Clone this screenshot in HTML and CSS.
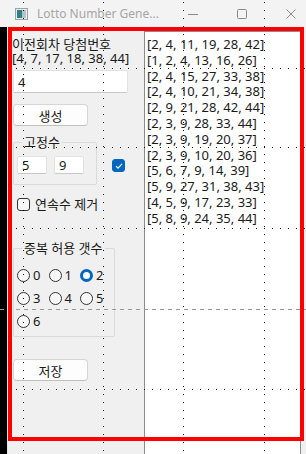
FILE: index.html
```html
<!DOCTYPE html>
<html lang="ko">
<head>
    <meta charset="UTF-8">
    <meta name="viewport" content="width=device-width, initial-scale=1.0">
    <title>Lotto Number Generator</title>
    <link rel="stylesheet" href="styles.css">
</head>
<body>
    <header class="titlebar">
        <svg class="app-icon" width="13" height="12" viewBox="0 0 13 12">
            <rect x="0.5" y="0.5" width="12" height="11" fill="#e8eef0" stroke="#9aa4a8"/>
            <rect x="2" y="2" width="5" height="8" fill="#2f7f86"/>
            <rect x="7" y="2" width="4" height="8" fill="#b9c3c6"/>
        </svg>
        <span class="title">Lotto Number Gene...</span>
        <div class="controls">
            <span class="ctl">
                <svg width="12" height="12" viewBox="0 0 12 12"><path d="M1 6.5h10" stroke="#8a8a8a" stroke-width="1"/></svg>
            </span>
            <span class="ctl">
                <svg width="12" height="12" viewBox="0 0 12 12"><rect x="1.5" y="1.5" width="9" height="9" rx="1" fill="none" stroke="#8a8a8a"/></svg>
            </span>
            <span class="ctl">
                <svg width="12" height="12" viewBox="0 0 12 12"><path d="M1.5 1.5l9 9M10.5 1.5l-9 9" stroke="#8a8a8a" stroke-width="1"/></svg>
            </span>
        </div>
    </header>

    <div class="window-body">
        <div class="edge"></div>
        <main class="form">
            <section class="controls-panel">
                <div class="prev-label">
                    <p>이전회차 당첨번호</p>
                    <p>[4, 7, 17, 18, 38, 44]</p>
                </div>
                <div class="text-input wide">4</div>
                <button class="btn">생성</button>

                <div class="fixed-row">
                    <fieldset class="group fixed-group">
                        <legend>고정수</legend>
                        <div class="fixed-inputs">
                            <div class="text-input small">5</div>
                            <div class="text-input small">9</div>
                        </div>
                    </fieldset>
                    <span class="check checked">
                        <svg width="10" height="10" viewBox="0 0 10 10"><path d="M2 5.2l2 2 4-4.4" fill="none" stroke="#fff" stroke-width="1.2"/></svg>
                    </span>
                </div>

                <label class="check-row">
                    <span class="check"></span>
                    <span>연속수 제거</span>
                </label>

                <fieldset class="group dup-group">
                    <legend>중복 허용 갯수</legend>
                    <div class="radios">
                        <label class="radio-item"><span class="radio"></span>0</label>
                        <label class="radio-item"><span class="radio"></span>1</label>
                        <label class="radio-item"><span class="radio on"></span>2</label>
                        <label class="radio-item"><span class="radio"></span>3</label>
                        <label class="radio-item"><span class="radio"></span>4</label>
                        <label class="radio-item"><span class="radio"></span>5</label>
                        <label class="radio-item"><span class="radio"></span>6</label>
                    </div>
                </fieldset>

                <button class="btn save">저장</button>
            </section>

            <section class="result-list">
                <p>[2, 4, 11, 19, 28, 42]</p>
                <p>[1, 2, 4, 13, 16, 26]</p>
                <p>[2, 4, 15, 27, 33, 38]</p>
                <p>[2, 4, 10, 21, 34, 38]</p>
                <p>[2, 9, 21, 28, 42, 44]</p>
                <p>[2, 3, 9, 28, 33, 44]</p>
                <p>[2, 3, 9, 19, 20, 37]</p>
                <p>[2, 3, 9, 10, 20, 36]</p>
                <p>[5, 6, 7, 9, 14, 39]</p>
                <p>[5, 9, 27, 31, 38, 43]</p>
                <p>[4, 5, 9, 17, 23, 33]</p>
                <p>[5, 8, 9, 24, 35, 44]</p>
            </section>
        </main>
    </div>

    <!-- designer overlay: grid dots and selection frame -->
    <div class="grid-overlay">
        <div class="vline" style="left: 23px"></div>
        <div class="vline" style="left: 103px"></div>
        <div class="vline" style="left: 183px"></div>
        <div class="vline" style="left: 264px"></div>
        <div class="hline" style="top: 68px"></div>
        <div class="hline" style="top: 147px"></div>
        <div class="hline" style="top: 228px"></div>
        <div class="hline dashed" style="top: 309px"></div>
        <div class="hline" style="top: 389px"></div>
    </div>
    <div class="selection"></div>
</body>
</html>
```

FILE: styles.css
```css
* {
    margin: 0;
    padding: 0;
    box-sizing: border-box;
}

body {
    width: 306px;
    height: 454px;
    overflow: hidden;
    position: relative;
    background-color: #f0f0f0;
    color: #1a1a1a;
    font-family: "Noto Sans", "Noto Sans CJK KR", sans-serif;
    font-size: 13px;
}

/* Title bar */
.titlebar {
    height: 27px;
    background-color: #f3f3f3;
    display: flex;
    align-items: center;
    padding-left: 15px;
}

.app-icon {
    flex: none;
}

.title {
    margin-left: 9px;
    font-size: 12px;
    color: #a6a6a6;
    width: 130px;
    white-space: nowrap;
}

.titlebar .controls {
    display: flex;
    margin-left: 10px;
}

.ctl {
    width: 49px;
    display: flex;
    justify-content: center;
}

/* Window body */
.window-body {
    display: flex;
    height: 427px;
}

.edge {
    width: 8px;
    background-color: #000;
    border-right: 1px solid #e6e6e6;
}

.form {
    flex: 1;
    display: flex;
    padding: 4px 0 0 4px;
}

.controls-panel {
    width: 132px;
    display: flex;
    flex-direction: column;
    align-items: flex-start;
}

.prev-label {
    margin-top: 6px;
    line-height: 14px;
}

.text-input {
    background-color: #fff;
    border: 1px solid #e2e2e2;
    border-bottom-color: #c8c8c8;
    border-radius: 2px;
    line-height: 16px;
    padding-left: 4px;
}

.text-input.wide {
    width: 115px;
    height: 23px;
    margin: 5px 0 0 1px;
    padding-top: 3px;
}

.text-input.small {
    width: 30px;
    height: 18px;
}

.btn {
    font-family: inherit;
    font-size: 13px;
    color: #1a1a1a;
    width: 75px;
    height: 22px;
    margin: 11px 0 0 1px;
    background-color: #fdfdfd;
    border: 1px solid #d6d6d6;
    border-bottom-color: #c0c0c0;
    border-radius: 4px;
}

/* Group boxes */
.group {
    border: 1px solid #dadada;
    border-radius: 2px;
    margin-left: 1px;
}

.group legend {
    margin-left: 5px;
    padding: 0 2px;
    line-height: 14px;
}

.fixed-row {
    display: flex;
    align-items: flex-end;
    margin-top: 9px;
}

.fixed-group {
    width: 84px;
    height: 50px;
    padding: 7px 0 0 3px;
}

.fixed-inputs {
    display: flex;
    gap: 7px;
}

.check {
    width: 13px;
    height: 13px;
    border: 1px solid #333;
    border-radius: 3px;
    background-color: #f7f7f7;
    display: flex;
    align-items: center;
    justify-content: center;
}

.check.checked {
    background-color: #0067c0;
    border-color: #0067c0;
    margin: 0 0 13px 15px;
}

.check-row {
    display: flex;
    align-items: center;
    gap: 5px;
    margin: 12px 0 0 5px;
    line-height: 14px;
}

.dup-group {
    width: 102px;
    height: 96px;
    margin-top: 30px;
    padding: 9px 0 0 3px;
}

.radios {
    display: grid;
    grid-template-columns: repeat(3, 31.5px);
    grid-template-rows: 22px 24px 22px;
}

.radio-item {
    display: flex;
    align-items: center;
    gap: 3px;
    line-height: 14px;
}

.radio {
    width: 13px;
    height: 13px;
    border: 1px solid #333;
    border-radius: 50%;
    background-color: #f7f7f7;
}

.radio.on {
    border: 3.5px solid #0067c0;
    background-color: #fff;
}

.btn.save {
    margin-top: 22px;
}

/* Result list */
.result-list {
    width: 157px;
    height: 430px;
    background-color: #fff;
    border: 1px solid #8c8c8c;
    padding: 5px 0 0 2px;
    line-height: 15.8px;
    white-space: nowrap;
}

/* Designer overlay */
.grid-overlay {
    position: absolute;
    inset: 0;
    pointer-events: none;
}

.vline {
    position: absolute;
    top: 2px;
    bottom: 0;
    width: 1px;
    background: repeating-linear-gradient(to bottom, #000 0 1px, transparent 1px 8px);
}

.hline {
    position: absolute;
    left: 0;
    right: 0;
    height: 1px;
    background: repeating-linear-gradient(to right, #000 0 1px, transparent 1px 8px);
}

.hline.dashed {
    background: repeating-linear-gradient(to right, #999 0 4px, transparent 4px 8px);
}

.selection {
    position: absolute;
    left: 8px;
    top: 27px;
    width: 296px;
    height: 414px;
    border: 4px solid #f00;
    pointer-events: none;
}
```
